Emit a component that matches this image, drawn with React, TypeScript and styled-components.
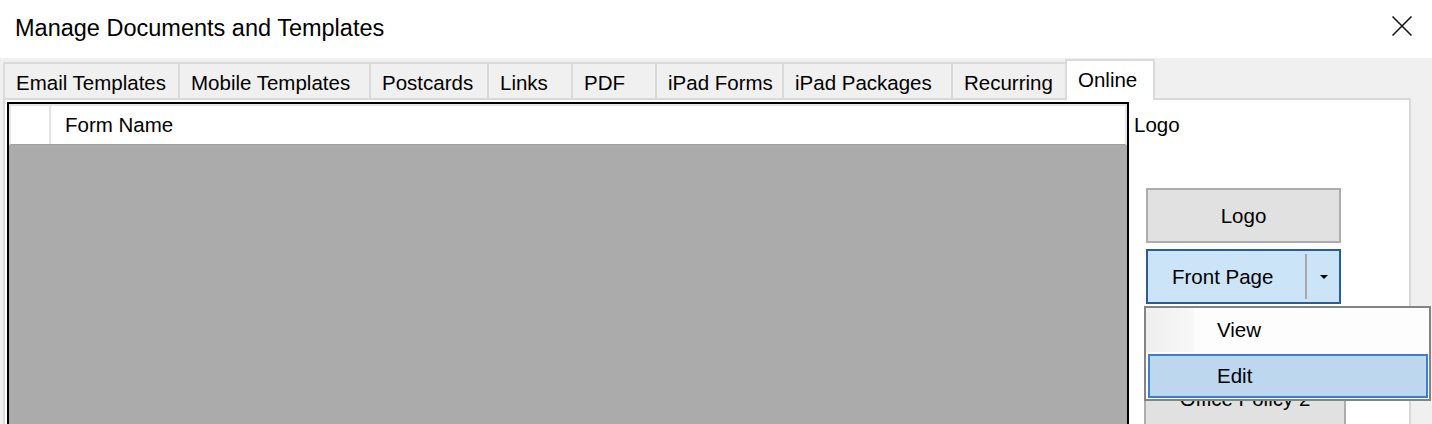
import styled, { createGlobalStyle } from 'styled-components';

const GlobalStyle = createGlobalStyle`
  html, body {
    margin: 0;
    padding: 0;
    background: #f0f0f0;
    overflow: hidden;
  }
  body {
    font-family: "Liberation Sans", Arial, sans-serif;
    color: #000;
  }
`;

const Window = styled.div`
  position: relative;
  width: 1432px;
  height: 424px;
  overflow: hidden;
  background: #f0f0f0;
  display: flex;
  flex-direction: column;
`;

const TitleBar = styled.div`
  flex-shrink: 0;
  height: 58px;
  box-sizing: border-box;
  padding: 0 20px 1px 15px;
  background: #fff;
  display: flex;
  align-items: center;
  justify-content: space-between;
`;

const Title = styled.span`
  font-size: 23.5px;
`;

const CloseGlyph = styled.svg`
  align-self: flex-start;
  margin-top: 16px;
  width: 20px;
  height: 20px;
`;

const TabStrip = styled.div`
  flex-shrink: 0;
  height: 40px;
  padding-left: 3px;
  display: flex;
  align-items: flex-end;
`;

const Tab = styled.div<{ $width: number; $active?: boolean }>`
  box-sizing: border-box;
  width: ${({ $width }) => $width}px;
  height: ${({ $active }) => ($active ? 41 : 36)}px;
  margin-bottom: ${({ $active }) => ($active ? -2 : 0)}px;
  padding: 7px 0 0 11px;
  border-top: 2px solid #dadada;
  border-left: 2px solid #dadada;
  border-right: ${({ $active }) => ($active ? '2px solid #dadada' : 'none')};
  background: ${({ $active }) => ($active ? '#fff' : '#f0f0f0')};
  font-size: 20.5px;
  white-space: nowrap;
  position: ${({ $active }) => ($active ? 'relative' : 'static')};
  z-index: ${({ $active }) => ($active ? 1 : 'auto')};
`;

const TabPage = styled.div`
  flex: 1;
  margin-left: 3px;
  width: 1408px;
  box-sizing: border-box;
  border: 2px solid #d9d9d9;
  border-bottom: none;
  background: #fff;
  padding: 2px 0 0 2px;
  display: flex;
  min-height: 0;
`;

const Grid = styled.div`
  width: 1122px;
  flex-shrink: 0;
  box-sizing: border-box;
  border: 2px solid #000;
  border-bottom: none;
  background: #ababab;
  display: flex;
  flex-direction: column;
`;

const GridHeader = styled.div`
  height: 41px;
  box-sizing: border-box;
  background: #fff;
  border: 2px solid #e6e6e6;
  border-bottom: 1px solid #a0a0a0;
  display: flex;
`;

const RowHeaderCell = styled.div`
  width: 38px;
  border-right: 2px solid #e3e3e3;
`;

const ColumnCell = styled.div`
  flex: 1;
  padding-left: 14px;
  display: flex;
  align-items: center;
  font-size: 20.5px;
`;

const SidePane = styled.div`
  flex: 1;
  padding-left: 5px;
  display: flex;
  flex-direction: column;
`;

const FieldLabel = styled.div`
  margin-top: 11px;
  font-size: 20.5px;
  line-height: 24px;
`;

const ButtonStack = styled.div`
  margin: 51px 0 0 12px;
  display: flex;
  flex-direction: column;
  gap: 6px;
`;

const PushButton = styled.div<{ $wide?: boolean }>`
  box-sizing: border-box;
  width: ${({ $wide }) => ($wide ? 202 : 195)}px;
  margin-left: ${({ $wide }) => ($wide ? -2 : 0)}px;
  height: 55px;
  border: 2px solid #adadad;
  background: #e1e1e1;
  display: flex;
  align-items: center;
  justify-content: center;
  font-size: 20.5px;
  flex-shrink: 0;
`;

const SplitButton = styled.div`
  box-sizing: border-box;
  width: 195px;
  height: 55px;
  border: 2px solid #2c5b9c;
  background: #cce4f7;
  display: flex;
  align-items: center;
  font-size: 20.5px;
  flex-shrink: 0;
`;

const SplitLabel = styled.div`
  flex: 1;
  padding-left: 24px;
`;

const SplitDivider = styled.div`
  width: 2px;
  height: 45px;
  background: #a8a8a8;
`;

const SplitArrow = styled.div`
  width: 30px;
  display: flex;
  justify-content: center;
  align-items: center;
  padding-left: 2px;
`;

const DropMenu = styled.div`
  position: absolute;
  left: 1144px;
  top: 306px;
  width: 287px;
  box-sizing: border-box;
  border: 2px solid #848484;
  background: #fcfcfc;
  padding-bottom: 1px;
  display: flex;
  flex-direction: column;
  gap: 2px;
  z-index: 5;
`;

const MenuItem = styled.div<{ $hot?: boolean }>`
  box-sizing: border-box;
  height: 44px;
  display: flex;
  align-items: center;
  font-size: 20.5px;
  padding-left: ${({ $hot }) => ($hot ? 67 : 71)}px;
  margin: ${({ $hot }) => ($hot ? '0 1px 0 2px' : '0')};
  border: ${({ $hot }) => ($hot ? '2px solid #3a7fd0' : 'none')};
  background: ${({ $hot }) =>
    $hot
      ? '#bdd7ef'
      : 'linear-gradient(90deg, #eeeeee 0px, #f8f8f8 47px, #fdfdfd 48px, #fdfdfd 100%)'};
`;

const tabs = [
  { name: 'Email Templates', width: 175 },
  { name: 'Mobile Templates', width: 191 },
  { name: 'Postcards', width: 118 },
  { name: 'Links', width: 84 },
  { name: 'PDF', width: 84 },
  { name: 'iPad Forms', width: 127 },
  { name: 'iPad Packages', width: 169 },
  { name: 'Recurring', width: 114 },
  { name: 'Online', width: 90 },
];

export default function App() {
  return (
    <Window>
      <GlobalStyle />
      <TitleBar>
        <Title>Manage Documents and Templates</Title>
        <CloseGlyph viewBox="0 0 20 20">
          <path d="M0.5 0.5 L19.5 19.5 M19.5 0.5 L0.5 19.5" stroke="#111" strokeWidth="1.5" fill="none" />
        </CloseGlyph>
      </TitleBar>

      <TabStrip>
        {tabs.map((t) => (
          <Tab key={t.name} $width={t.width} $active={t.name === 'Online'}>
            {t.name}
          </Tab>
        ))}
      </TabStrip>

      <TabPage>
        <Grid>
          <GridHeader>
            <RowHeaderCell />
            <ColumnCell>Form Name</ColumnCell>
          </GridHeader>
        </Grid>

        <SidePane>
          <FieldLabel>Logo</FieldLabel>
          <ButtonStack>
            <PushButton>Logo</PushButton>
            <SplitButton>
              <SplitLabel>Front Page</SplitLabel>
              <SplitDivider />
              <SplitArrow>
                <svg width="8" height="4" viewBox="0 0 8 4">
                  <path d="M0 0 H8 L4 4 Z" fill="#000" />
                </svg>
              </SplitArrow>
            </SplitButton>
            {/* hidden under the open menu */}
            <PushButton />
            <PushButton $wide>Office Policy 2</PushButton>
          </ButtonStack>
        </SidePane>
      </TabPage>

      <DropMenu>
        <MenuItem>View</MenuItem>
        <MenuItem $hot>Edit</MenuItem>
      </DropMenu>
    </Window>
  );
}
